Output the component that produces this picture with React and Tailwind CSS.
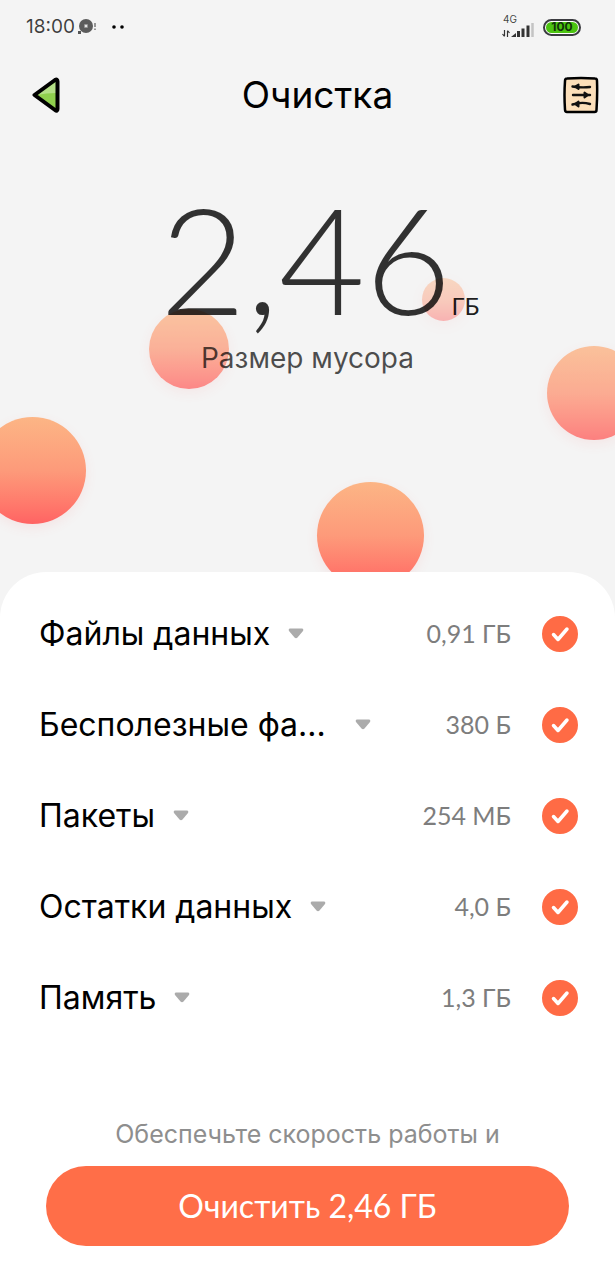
import { useState } from "react"

const initialItems = [
  { id: "data", label: "Файлы данных", size: "0,91 ГБ", checked: true },
  { id: "useless", label: "Бесполезные фа...", size: "380 Б", checked: true, long: true },
  { id: "packages", label: "Пакеты", size: "254 МБ", checked: true },
  { id: "leftovers", label: "Остатки данных", size: "4,0 Б", checked: true },
  { id: "memory", label: "Память", size: "1,3 ГБ", checked: true },
]

const Ball = ({ className }) => (
  <div
    aria-hidden="true"
    className={`absolute rounded-full bg-linear-to-b from-[#fcb585] via-[#fd9a7a] to-[#ff6363] shadow-[0_4px_12px_rgba(255,99,99,0.1)] ${className}`}
  />
)

function StatusBar() {
  return (
    <div className="flex items-center justify-between h-[54px] pl-[26px] pr-[34px] text-black/75">
      <div className="flex items-center gap-0.5">
        <span className="text-[19px] leading-6">18:00</span>
        <svg width="20" height="16" viewBox="0 0 20 16" className="shrink-0">
          <circle cx="9" cy="7" r="7" fill="#5c5c5c" />
          <rect x="7" y="5" width="4" height="4" rx="1" fill="#999" />
          <circle cx="9" cy="7" r="1" fill="#fff" />
          <rect x="1" y="12" width="3" height="3" fill="#555" />
          <path d="M18 4v4M18 9.500v1.500" stroke="#777" strokeWidth="1.500" />
        </svg>
        <svg width="14" height="4" viewBox="0 0 14 4" className="ml-3 shrink-0">
          <circle cx="3" cy="2" r="1.800" />
          <circle cx="11" cy="2" r="1.800" />
        </svg>
      </div>
      <div className="flex items-center gap-2">
        <div className="flex flex-col">
          <span className="pl-0.5 text-[10px] leading-2">4G</span>
          <svg width="34" height="16" viewBox="0 0 34 16">
            <path d="M3.500 7v6M3.500 13.500l-2-2.500M6.500 14V8M6.500 7.500l2 2.500" fill="none" stroke="#333" strokeWidth="1.200" />
            <path d="M10 14l5-4v4z" fill="#333" />
            <path d="M17.500 14V8M22 14V5.500M27 14V2.500" stroke="#333" strokeWidth="3" />
            <path d="M31.500 14V0" stroke="#c4c4c4" strokeWidth="2.500" />
          </svg>
        </div>
        <div className="w-[38px] h-[17px] rounded-full border-2 border-[#3b3b40] bg-white p-px">
          <div className="flex h-full items-center justify-center rounded-full bg-[#4cc411] text-xs font-bold text-[#12330a]">
            100
          </div>
        </div>
      </div>
    </div>
  )
}

function Header() {
  return (
    <header className="flex items-center justify-between h-[82px] pl-8 pr-4">
      <button type="button" aria-label="Назад" className="w-10">
        <svg width="30" height="38" viewBox="0 0 30 38">
          <path d="M3 19L25 3.500q1.500 15.500 0 31z" fill="#8fcf4d" />
          <path d="M5 18L24 6v11q-10 0-19 2z" fill="#b4df86" />
          <path d="M2.500 19L23 4q2.500-1.500 2.500 1.500V33q0 3-2.500 1z" fill="none" stroke="#000" strokeWidth="4" strokeLinejoin="round" />
        </svg>
      </button>
      <h1 className="text-[37px] text-black">Очистка</h1>
      <button type="button" aria-label="Настройки">
        <svg width="36" height="38" viewBox="0 0 36 38">
          <path d="M4 2.500q14-1 28 0 2 0 2 2.500.500 14-.500 29 0 2-2 2H4q-2 0-2-2.500Q1 19 2 5q0-2.500 2-2.500z" fill="#fcdfba" stroke="#000" strokeWidth="2.500" strokeLinejoin="round" />
          <path d="M9.500 10.500q9 1.500 17.500.500M10 19h17M9.500 28.500q9-3 17.500-.500" fill="none" stroke="#111" strokeWidth="2.400" strokeLinecap="round" />
          <path d="M12 10.500l3.500-2v4.500zM25 19l-3.500-2.500v5zM12 28l3.500-2.500v5z" fill="#111" stroke="#111" strokeWidth="2" strokeLinejoin="round" />
        </svg>
      </button>
    </header>
  )
}

function JunkRow({ item, onToggle }) {
  return (
    <li className="flex items-center h-[91px]">
      <button type="button" className="flex items-center gap-[18px] text-[32px] text-black">
        <span className={item.long ? "w-[298px] text-left whitespace-nowrap" : "whitespace-nowrap"}>{item.label}</span>
        <svg width="16" height="11" viewBox="0 0 16 11" className="shrink-0">
          <path d="M2 0.500h12q2 .500 1 2.500L9.500 9.500q-1.500 1.500-3 0L1 3Q0 1 2 .500z" fill="#ababab" />
        </svg>
      </button>
      <span className="ml-auto mr-[31px] whitespace-nowrap font-['Lato','Inter',sans-serif] text-[25px] text-[#7d7d7d]">{item.size}</span>
      <label className="relative flex size-9 shrink-0">
        <input
          type="checkbox"
          aria-label={item.label}
          checked={item.checked}
          onChange={() => onToggle(item.id)}
          className="peer size-9 appearance-none rounded-full border-2 border-gray-300 checked:border-[#ff6b45] checked:bg-[#ff6b45]"
        />
        <svg viewBox="0 0 36 36" className="pointer-events-none absolute inset-0 hidden peer-checked:block">
          <path d="M11.500 18.500l4.500 5L25 13" fill="none" stroke="#fff" strokeWidth="3.500" strokeLinecap="round" strokeLinejoin="round" />
        </svg>
      </label>
    </li>
  )
}

export default function App() {
  const [items, setItems] = useState(initialItems)

  const toggle = (id) => {
    setItems(items.map((it) => (it.id === id ? { ...it, checked: !it.checked } : it)))
  }

  return (
    <div className="relative flex flex-col min-h-screen overflow-hidden bg-[#f4f4f4] font-['Inter','Noto_Sans',sans-serif]">
      {/* Floating balls */}
      <Ball className="left-[149px] top-[309px] size-20 opacity-75" />
      <Ball className="left-[422px] top-[278px] size-[43px] opacity-45" />
      <Ball className="-right-[26px] top-[346px] size-[94px] opacity-80" />
      <Ball className="-left-[21px] top-[417px] size-[107px]" />
      <Ball className="left-[317px] top-[482px] size-[107px]" />

      <div className="relative">
        <StatusBar />
        <Header />
        <section className="h-[436px] pt-[52px] text-center">
          <p className="flex items-baseline justify-center pl-6 font-['Lato','Inter',sans-serif]">
            <span className="text-[149px] leading-[140px] font-light text-black/80">2,46</span>
            <span className="text-2xl text-black/90">ГБ</span>
          </p>
          <p className="mt-3 text-[28px] leading-9 text-black/70">Размер мусора</p>
        </section>
      </div>

      {/* Bottom sheet */}
      <main className="relative flex flex-col flex-1 rounded-t-[46px] bg-white pt-4">
        <ul className="pl-[39px] pr-[37px]">
          {items.map((item) => (
            <JunkRow key={item.id} item={item} onToggle={toggle} />
          ))}
        </ul>
        <div className="mt-auto px-[46px] pb-[34px] text-center">
          <p className="mb-3 text-[25px] leading-10 text-[#8e8e8e]">Обеспечьте скорость работы и</p>
          <button type="button" className="h-20 w-full rounded-full bg-[#ff6e48] font-['Lato','Inter',sans-serif] text-[32px] text-white">
            Очистить 2,46 ГБ
          </button>
        </div>
      </main>
    </div>
  )
}
